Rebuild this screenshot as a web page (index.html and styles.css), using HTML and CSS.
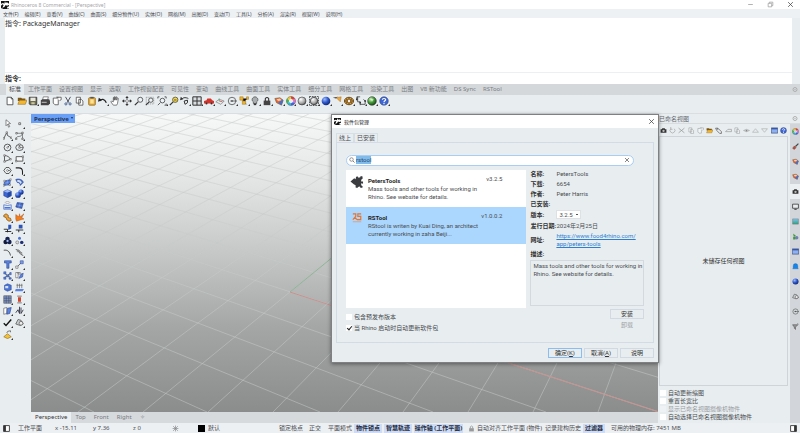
FILE: index.html
```html
<!DOCTYPE html>
<html lang="zh-CN">
<head>
<meta charset="utf-8">
<title>Rhinoceros 8 Commercial</title>
<link rel="stylesheet" href="styles.css">
</head>
<body>
<svg class="sprite" aria-hidden="true">
  <defs>
    <radialGradient id="gBlue" cx=".35" cy=".3" r=".8"><stop offset="0" stop-color="#9dbcff"/><stop offset=".5" stop-color="#2c55c8"/><stop offset="1" stop-color="#0b1f63"/></radialGradient>
    <radialGradient id="gGreen" cx=".35" cy=".3" r=".8"><stop offset="0" stop-color="#c8f0b0"/><stop offset=".5" stop-color="#3f9a35"/><stop offset="1" stop-color="#143a12"/></radialGradient>
    <radialGradient id="gGray" cx=".35" cy=".3" r=".8"><stop offset="0" stop-color="#fff"/><stop offset=".6" stop-color="#a8a8a8"/><stop offset="1" stop-color="#444"/></radialGradient>
    <linearGradient id="gSky" x2="0" y2="1"><stop offset="0" stop-color="#7fc4f5"/><stop offset="1" stop-color="#2fa17c"/></linearGradient>
  </defs>
  <g fill="none" stroke="#333" stroke-width="1">
  <symbol id="rhino" viewBox="0 0 12 12"><path fill="#111" d="M0 0h12v12H0z"/><path fill="#fff" d="M6 0l1 3 2-1 3 2v2L9 7 7 6 5 9l-3 1 2-4-2-1-2 2V4l3-1 2 1z"/><path fill="#fff" d="M9 9l3-1v3l-2 1zM1 10l2 2H0z"/></symbol>
  <symbol id="new" viewBox="0 0 12 12"><path fill="#fff" stroke="#444" d="M2.500 1.500h5l2 2v7h-7zM7.500 1.500v2h2"/></symbol>
  <symbol id="open" viewBox="0 0 12 12"><path fill="#7a5716" d="M1 2h4l1 1h4v3H1z"/><path fill="#f2b632" stroke="#8a6010" stroke-width=".6" d="M1 10l2-5h9l-2 5z"/></symbol>
  <symbol id="save" viewBox="0 0 12 12"><path fill="#6f6d4e" stroke="#333" d="M1.500 1.500h9v9h-8l-1-1z"/><path fill="#e8e8e0" d="M3 2h6v4H3z"/><path fill="#c9c7a0" d="M4 7.500h4V10H4z"/></symbol>
  <symbol id="print" viewBox="0 0 12 12"><path fill="#fff" stroke="#444" stroke-width=".7" d="M4 1h6L9 5H3z"/><path fill="#444" d="M1 5l2-1h8l1 2v3l-2 2H1z"/><path fill="#ddd" d="M2 7h6v1H2z"/></symbol>
  <symbol id="props" viewBox="0 0 12 12"><path fill="#fff" stroke="#444" stroke-width=".9" d="M1.500 2.500h6v8h-4l-2-2z"/><path fill="#fff" stroke="#444" stroke-width=".9" d="M5 1.500h6v3l-2 1M7 1v2"/></symbol>
  <symbol id="cut" viewBox="0 0 12 12"><path stroke="#334" d="M3 1l4 7M9 1L5 8"/><circle cx="3.500" cy="9.500" r="1.300" stroke="#35538c" fill="none"/><circle cx="8.500" cy="9.500" r="1.300" stroke="#35538c" fill="none"/></symbol>
  <symbol id="copy" viewBox="0 0 12 12"><path fill="#fff" stroke="#444" stroke-width=".9" d="M1.500 1.500h5v7h-5zM4.500 4h3l2 2v5h-5z"/></symbol>
  <symbol id="paste" viewBox="0 0 12 12"><rect x="2" y="2" width="8" height="9" rx="1" fill="#e9b03a" stroke="#7c5714" stroke-width=".8"/><path fill="#555" d="M4 1h4v2H4z"/><path fill="#ffe29a" d="M4 4h4v5H4z"/></symbol>
  <symbol id="undo" viewBox="0 0 12 12"><path fill="none" stroke="#222" stroke-width="1.500" d="M2 6c2-3 6-3 8 2"/><path fill="#222" d="M0 7l1-5 4 3z"/></symbol>
  <symbol id="hand" viewBox="0 0 12 12"><path fill="#fff" stroke="#444" stroke-width=".8" d="M4 11L1 7l1-1 2 1V2l1 0v3-4h1v4l1-4 1 0v4l1-3 1 1-1 6-1 2z"/></symbol>
  <symbol id="orbit" viewBox="0 0 12 12"><path stroke="#333" fill="none" d="M6 1v10M1 6h10"/><path fill="#333" d="M6 0l2 2.500H4zM6 12l2-2.500H4zM0 6l2.500-2v4zM12 6L9.500 4v4z"/><circle cx="6" cy="6" r="1.200" fill="#eee"/></symbol>
  <symbol id="mag" viewBox="0 0 12 12"><path stroke="#333" stroke-width="1.500" d="M5 7l-4 4"/><circle cx="7.500" cy="4.500" r="3" fill="#eef3f7" stroke="#444"/></symbol>
  <symbol id="magwin" viewBox="0 0 12 12"><path fill="none" stroke="#777" stroke-width=".7" stroke-dasharray="1.500 1" d="M1.500 1.500h9v8h-9z"/><path stroke="#333" stroke-width="1.300" d="M5 7l-4 4"/><circle cx="7" cy="5" r="2.600" fill="#eef3f7" stroke="#444"/></symbol>
  <symbol id="magext" viewBox="0 0 12 12"><path fill="none" stroke="#333" stroke-width=".9" d="M1 3V1h2M9 1h2v2M11 9v2H9M4 8l-3 3"/><circle cx="6.500" cy="5.500" r="2.800" fill="#eef3f7" stroke="#444"/></symbol>
  <symbol id="magsel" viewBox="0 0 12 12"><path stroke="#333" stroke-width="1.500" d="M5 7l-4 4"/><circle cx="7.500" cy="4.500" r="3.200" fill="#f5d33c" stroke="#554"/><path fill="#776" d="M6 4h3v1.500H6z"/></symbol>
  <symbol id="undoview" viewBox="0 0 12 12"><path fill="none" stroke="#333" stroke-width="1.200" d="M2 4c2-3 6-2 8-1M5 6l4-1v3l-3 2z"/><path fill="#333" d="M0 5l1-4 3 3z"/></symbol>
  <symbol id="four" viewBox="0 0 12 12"><path fill="#d9dde0" stroke="#333" stroke-width="1.200" d="M1 1h10v10H1zM6 1v10M1 6h10"/></symbol>
  <symbol id="car" viewBox="0 0 12 12"><path fill="#d2332b" d="M0 6l3-1 1-2h4l2 2 2 1v3H0z"/><circle cx="3" cy="9" r="1.200" fill="#333"/><circle cx="9" cy="9" r="1.200" fill="#333"/></symbol>
  <symbol id="cplane" viewBox="0 0 12 12"><path fill="#e9eceb" stroke="#777" stroke-width=".8" d="M1 7l4-3 6 2-4 4z"/><path stroke="#c55" d="M5 6l4 1"/><path stroke="#4a7" d="M5 6V3"/></symbol>
  <symbol id="circle" viewBox="0 0 12 12"><circle cx="6" cy="6" r="4.500" fill="none" stroke="#555"/><path stroke="#555" d="M4 6h8"/><path fill="#555" d="M5 5h2v2H5z"/></symbol>
  <symbol id="snap" viewBox="0 0 12 12"><path stroke="#555" d="M3 3l3 4 4-4M6 7l3 3"/><path fill="#f0b429" stroke="#8a6010" stroke-width=".5" d="M1 1h4v4H1zM4 6h4v4H4zM9 1h2.500v3H9z"/></symbol>
  <symbol id="bulb" viewBox="0 0 12 12"><path fill="#a9adb0" stroke="#444" stroke-width=".8" d="M4 7C1 5 3 1 6 1s5 4 2 6v2H4z"/><path fill="#333" d="M4.500 9h3v2h-3z"/></symbol>
  <symbol id="lock" viewBox="0 0 12 12"><path fill="none" stroke="#333" stroke-width="1.300" d="M4 6V3q2-2.500 4 0v3"/><path fill="#444" d="M2 5.500h8V11H2z"/></symbol>
  <symbol id="layer" viewBox="0 0 12 12"><path fill="#e7643c" stroke="#552" stroke-width=".6" d="M1 3l6-1 4 3-2 6-6-3z"/><path fill="#4b6fc0" d="M5 8l5-4 1 2-2 5z"/><path fill="#ffd0a8" d="M3 4l4-1 2 2-4 1z"/></symbol>
  <symbol id="wheel" viewBox="0 0 12 12"><g fill="none" stroke-width="2.800"><path stroke="#e63b2e" d="M6 2a4 4 0 0 1 3.500 2"/><path stroke="#e86ad0" d="M9.500 4a4 4 0 0 1 0 4"/><path stroke="#4560e8" d="M9.500 8A4 4 0 0 1 6 10"/><path stroke="#28b8d8" d="M6 10a4 4 0 0 1-3.500-2"/><path stroke="#3cb948" d="M2.500 8a4 4 0 0 1 0-4"/><path stroke="#edc52c" d="M2.500 4A4 4 0 0 1 6 2"/></g><circle cx="6" cy="6" r="5.500" fill="none" stroke="#444" stroke-width=".5"/></symbol>
  <symbol id="ballgray" viewBox="0 0 12 12"><circle cx="6" cy="6" r="4.800" fill="url(#gGray)" stroke="#333" stroke-width=".7"/></symbol>
  <symbol id="ballsel" viewBox="0 0 12 12"><path fill="none" stroke="#333" stroke-dasharray="2 1" d="M.500.500h11v11H.500z"/><circle cx="6" cy="6" r="4.500" fill="url(#gGray)" stroke="#333" stroke-width=".9"/></symbol>
  <symbol id="ballblue" viewBox="0 0 12 12"><circle cx="6" cy="6" r="5.200" fill="url(#gBlue)"/></symbol>
  <symbol id="spot" viewBox="0 0 12 12"><path fill="#333" d="M1 2l6-1-2 2z"/><path fill="#f0a73a" stroke="#9c6418" stroke-width=".5" d="M5 2l6-1-1 6z"/></symbol>
  <symbol id="gear" viewBox="0 0 12 12"><ellipse cx="6" cy="6" rx="5.500" ry="4.500" fill="#d69a3d" stroke="#5a3c10"/><path stroke="#4a3212" d="M6 2v8M1 6h10M2.500 3.500l7 5M9.500 3.500l-7 5"/><circle cx="6" cy="6" r="1.500" fill="#eee"/></symbol>
  <symbol id="dims" viewBox="0 0 12 12"><path fill="none" stroke="#333" stroke-width=".9" d="M5 1H1v3M2 1v6h3M5 8v3M5 10h6V6M9 4l2 2"/><path fill="#333" d="M0 3h2v2H0zM4 7h2v2H4zM10 5h2v2h-2z"/></symbol>
  <symbol id="ballgreen" viewBox="0 0 12 12"><circle cx="6" cy="6" r="5.200" fill="url(#gGreen)" stroke="#222" stroke-width=".6"/><path fill="#fff" d="M4 3l4 1-2 3z" opacity=".6"/></symbol>
  <symbol id="help" viewBox="0 0 12 12"><circle cx="6" cy="6" r="5.200" fill="#3d65d6" stroke="#234" stroke-width=".5"/><path fill="none" stroke="#fff" stroke-width="1.400" d="M4 4.500c0-2 4-2 4 0C8 6 6 5.500 6 7.500M6 8.500V10"/></symbol>

  <symbol id="arrow" viewBox="0 0 12 12"><path fill="#fff" stroke="#444" stroke-width=".8" d="M4 1v8l2-2 1.500 4 1.500-1-2-3.500 3-.5z"/></symbol>
  <symbol id="point" viewBox="0 0 12 12"><path fill="#fff" stroke="#333" stroke-width=".8" d="M5 5h2.500v2.500H5z"/></symbol>
  <symbol id="poly" viewBox="0 0 12 12"><path fill="none" stroke="#333" d="M1 10l4-8 1 4 5 3"/><path fill="#fff" stroke="#333" stroke-width=".6" d="M0 9h2v2H0zM4 1h2v2H4zM10 8h2v2h-2z"/></symbol>
  <symbol id="curve" viewBox="0 0 12 12"><path fill="none" stroke="#444" stroke-width=".8" d="M1.500 10.500c0-6 8 0 8-8M2 3h8v8"/><path fill="#fff" stroke="#333" stroke-width=".7" d="M.500 9.500h2v2h-2zM1 2h2v2H1zM9 1.500h2v2H9zM9 9.500h2v2H9z"/></symbol>
  <symbol id="circ" viewBox="0 0 12 12"><circle cx="6" cy="6" r="4.500" fill="none" stroke="#333"/><path stroke="#333" d="M6 6l3-3"/><circle cx="6" cy="6" r="1" fill="#fff" stroke="#333" stroke-width=".6"/></symbol>
  <symbol id="ellipse" viewBox="0 0 12 12"><ellipse cx="6" cy="6" rx="5" ry="4" fill="none" stroke="#333"/><path fill="none" stroke="#333" stroke-width=".7" d="M6 2v4h5"/><path fill="#fff" stroke="#333" stroke-width=".6" d="M5 5h2v2H5zM5 1h2v2H5z"/></symbol>
  <symbol id="arc" viewBox="0 0 12 12"><path fill="none" stroke="#333" d="M2 10V2c3 0 7 2 8 5z"/><path fill="#fff" stroke="#333" stroke-width=".6" d="M1 1h2v2H1zM1 9h2v2H1zM9 6h2v2H9z"/></symbol>
  <symbol id="rect" viewBox="0 0 12 12"><path fill="#f8f9fa" stroke="#333" d="M1.500 3.500h9v6h-9z"/><path fill="#fff" stroke="#333" stroke-width=".6" d="M.500 8.500h2v2h-2zM9.500 2.500h2v2h-2z"/></symbol>
  <symbol id="polygon" viewBox="0 0 12 12"><path fill="none" stroke="#333" d="M4 2h4l3 4-3 4H4L1 6z"/><path stroke="#333" d="M6 6h3"/><circle cx="6" cy="6" r="1.200" fill="#fff" stroke="#333" stroke-width=".6"/></symbol>
  <symbol id="fillet" viewBox="0 0 12 12"><path fill="none" stroke="#222" stroke-width="1.400" d="M1 2.500h4c3 0 5 2 5 5v4"/></symbol>
  <symbol id="surf" viewBox="0 0 12 12"><path fill="#4a74d4" stroke="#203a80" stroke-width=".7" d="M2 4l8-2-1 7-8 1z"/><path fill="#fff" stroke="#333" stroke-width=".5" d="M1 3h2v2H1zM9 1h2v2H9zM0 9h2v2H0zM8 8h2v2H8z"/><path stroke="#a9c1f5" stroke-width=".6" d="M6 3l-1 7M2 7l7-2"/></symbol>
  <symbol id="sweep" viewBox="0 0 12 12"><path fill="#4a74d4" stroke="#203a80" stroke-width=".7" d="M1 2c5-2 10 1 10 4L7 10c0-3-2-4-4-4z"/><path fill="#d5e0fb" d="M3 3c3-1 5 1 6 3L7 8C7 6 5 5 3 5z"/></symbol>
  <symbol id="box" viewBox="0 0 12 12"><path fill="#3d66cf" stroke="#16307c" stroke-width=".6" d="M1 3l5-2 5 2v6l-5 2.500L1 9z"/><path fill="#9db8f5" d="M1 3l5-2 5 2-5 2z"/><path fill="#244aa8" d="M6 5l5-2v6l-5 2.500z"/></symbol>
  <symbol id="union" viewBox="0 0 12 12"><circle cx="8" cy="4" r="3.500" fill="url(#gBlue)"/><circle cx="4" cy="8" r="3.800" fill="url(#gBlue)"/></symbol>
  <symbol id="drum" viewBox="0 0 12 12"><ellipse cx="6" cy="2" rx="3" ry="1.300" fill="#f5f5f5" stroke="#777" stroke-width=".6"/><path fill="#dfe8fb" stroke="#2e55b5" stroke-width=".8" d="M1 5q5 2 10 0v6H1z"/><path fill="#4a74d4" d="M2 8h8v2H2z"/></symbol>
  <symbol id="mesh" viewBox="0 0 12 12"><path fill="#4068c4" stroke="#203a80" stroke-width=".7" d="M3 2l8 1-2 7-8-2z"/><path stroke="#a9c1f5" stroke-width=".6" d="M7 2L5 9M2 5l8 2"/></symbol>
  <symbol id="explode" viewBox="0 0 12 12"><path fill="#f2a33a" stroke="#5c3a0a" stroke-width=".8" d="M1 3l3-2 3 2v3l3 1 1 3-3 1-3-2-1-3-3-1z"/></symbol>
  <symbol id="burst" viewBox="0 0 12 12"><path fill="#ef7d22" stroke="#a44808" stroke-width=".5" d="M1 2l4 3 1-4 1 4 5-4-3 5 3 2-4 1-6 2-1-3z"/></symbol>
  <symbol id="trim" viewBox="0 0 12 12"><path fill="#2e55b5" d="M7 1h4v5L7 8z"/><path fill="none" stroke="#222" stroke-width="1.200" d="M1 7h5v4M3 10h8"/></symbol>
  <symbol id="split" viewBox="0 0 12 12"><path fill="#2e55b5" d="M5 1h5v5H5z"/><path fill="none" stroke="#222" stroke-width="1.200" d="M1 8h10M5 8v3"/></symbol>
  <symbol id="group" viewBox="0 0 12 12"><circle cx="6" cy="4" r="3" fill="#16224e"/><circle cx="3.500" cy="8" r="3" fill="#111a3a"/><circle cx="8.500" cy="8" r="3" fill="#16224e"/><circle cx="6" cy="6.500" r="1.500" fill="#a9c1f5"/></symbol>
  <symbol id="ungroup" viewBox="0 0 12 12"><circle cx="6" cy="3" r="2" fill="#4a74d4"/><circle cx="3" cy="8.500" r="2" fill="#ddd" stroke="#444" stroke-width=".6"/><circle cx="9" cy="8.500" r="2.300" fill="#1c2f77"/></symbol>
  <symbol id="arc2" viewBox="0 0 12 12"><path fill="none" stroke="#333" stroke-width="1.100" d="M1 3c5-1 8 2 9 7"/></symbol>
  <symbol id="edit" viewBox="0 0 12 12"><path fill="none" stroke="#333" d="M1 2c4 0 4 6 10 8M4 2l4 4"/><path fill="#fff" stroke="#333" stroke-width=".6" d="M3 3h2v2H3zM7 6h2v2H7z"/></symbol>
  <symbol id="text" viewBox="0 0 12 12"><path fill="#5b83e2" stroke="#1c3680" stroke-width=".7" d="M2 1h9v3H8v7H5V4H2z"/></symbol>
  <symbol id="move" viewBox="0 0 12 12"><path stroke="#444" d="M3 9l6-6"/><path fill="#fff" stroke="#444" stroke-width=".7" d="M1 8h3v3H1z"/><path fill="#7b9bea" stroke="#2e4a90" stroke-width=".7" d="M7 1h4v4H7z"/></symbol>
  <symbol id="array" viewBox="0 0 12 12"><path stroke="#333" d="M2 3l8 6M2 9l8-6"/><path fill="#5b83e2" stroke="#1c3680" stroke-width=".5" d="M1 1h3v3H1zM5 5h3v3H5zM9 2h2v3H9zM1 8h3v3H1zM8 9h3v2H8z"/></symbol>
  <symbol id="orient" viewBox="0 0 12 12"><path fill="#fff" stroke="#444" stroke-width=".7" d="M1 2h3v7H1zM4 2h3v2H4z"/><path fill="#5b83e2" stroke="#1c3680" stroke-width=".6" d="M5 10l3-6 3-1-1 5z"/></symbol>
  <symbol id="cyl" viewBox="0 0 12 12"><path fill="#4a74d4" stroke="#203a80" stroke-width=".6" d="M2 3l4-2 5 2v6l-5 2-4-2z"/><path fill="#d5e0fb" d="M3 4h4v3H3z"/></symbol>
  <symbol id="extrude" viewBox="0 0 12 12"><path stroke="#555" stroke-width=".8" d="M3 7V1M6 7V1M9 7V1M2 3h8"/><path fill="#5b83e2" d="M1 8h11l-2 3H0z"/></symbol>
  <symbol id="grid" viewBox="0 0 12 12"><path fill="#7c97cf" stroke="#444" stroke-width=".7" d="M1 1h10v10H1zM4.300 1v10M7.700 1v10M1 4.300h10M1 7.700h10"/></symbol>
  <symbol id="align" viewBox="0 0 12 12"><path fill="#d0432c" d="M4 3h4v6H4z"/><path stroke="#555" d="M3 1.500h6M3 10.500h6"/></symbol>
  <symbol id="flip" viewBox="0 0 12 12"><path fill="#fff" stroke="#333" stroke-width=".7" d="M1 3l4-1v8l-4 1z"/><path fill="#5b83e2" stroke="#1c3680" stroke-width=".7" d="M6 3l5-1-2 8-4 1z"/></symbol>
  <symbol id="split2" viewBox="0 0 12 12"><path fill="none" stroke="#334" stroke-width="1.200" d="M1 9l3-4 2 5V1M8 2v8l3-5"/></symbol>
  <symbol id="check" viewBox="0 0 12 12"><path fill="none" stroke="#111" stroke-width="1.800" d="M1 7l3 3 7-8"/></symbol>
  <symbol id="shape" viewBox="0 0 12 12"><path fill="#c8cccf" stroke="#333" stroke-width=".8" d="M1 8l3-6 4 1 3 5-4 2z"/><circle cx="8" cy="7" r="2.500" fill="#eee" stroke="#333" stroke-width=".7"/></symbol>
  <symbol id="bell2" viewBox="0 0 12 12"><path fill="#f3c138" stroke="#7b5a10" stroke-width=".7" d="M1 9l5-4 5 4-5 2.500z"/><path fill="none" stroke="#555" d="M5 4q0-3 5-3v2"/></symbol>

  <symbol id="camera" viewBox="0 0 12 12"><path fill="#333" d="M1 4h2l1-2h4l1 2h2v6H1z"/><circle cx="6" cy="6.500" r="2" fill="#bbb"/></symbol>
  <symbol id="reset" viewBox="0 0 12 12"><path fill="none" stroke="#aaa" stroke-width="1.300" d="M3 3a4.200 4.200 0 1 0 6 0M3 0v4h3"/></symbol>
  <symbol id="xmark" viewBox="0 0 12 12"><path stroke="#999" stroke-width="1.300" d="M1 2l10 8M11 2L1 10"/></symbol>
  <symbol id="link" viewBox="0 0 12 12"><path fill="none" stroke="#555" stroke-width="1.200" d="M1 2h4l6 6v3H8L3 6zM4 2l1 3"/></symbol>
  <symbol id="tag" viewBox="0 0 12 12"><path fill="none" stroke="#999" stroke-width="1.200" d="M1 8l4-4h6v4z"/></symbol>
  <symbol id="eye" viewBox="0 0 12 12"><path fill="none" stroke="#999" d="M1 6q5-4 10 0q-5 4-10 0"/><circle cx="6" cy="6" r="1.500" fill="#888"/></symbol>
  <symbol id="up" viewBox="0 0 12 12"><path fill="none" stroke="#aaa" stroke-width="1.100" d="M1 9l5-6 5 6z"/></symbol>
  <symbol id="down" viewBox="0 0 12 12"><path fill="none" stroke="#aaa" stroke-width="1.100" d="M1 3l5 6 5-6z"/></symbol>
  <symbol id="window" viewBox="0 0 12 12"><path fill="#8eb0f0" stroke="#2b3c70" d="M.500 1.500h11v9H.500z"/><path fill="#2b4a9c" d="M1 2h10v2H1z"/></symbol>
  <symbol id="brush" viewBox="0 0 12 12"><path stroke="#444" stroke-width="2" d="M11 1L6 6"/><path fill="#d0432c" stroke="#333" stroke-width=".6" d="M1 9l3-4 3 3-3 3z"/></symbol>
  <symbol id="screen" viewBox="0 0 12 12"><path fill="#e8ebee" stroke="#222" stroke-width="1.200" d="M1 2h10v7H1z"/><path fill="#222" d="M4 10h4v1.500H4z"/></symbol>
  <symbol id="image" viewBox="0 0 12 12"><path fill="url(#gSky)" stroke="#777" stroke-width=".8" d="M1 1.500h10v9H1z"/></symbol>
  <symbol id="plant" viewBox="0 0 12 12"><path fill="#3f9a35" d="M2 1l5 4-4 2zM2 7h4v4H2z"/><circle cx="8" cy="8" r="3" fill="#6f7fb0"/></symbol>
  <symbol id="bell" viewBox="0 0 12 12"><path fill="#1684e8" stroke="#0b5cad" stroke-width=".5" d="M2 9V5q0-4 4-4t4 4v4l1 1H1z"/></symbol>
  <symbol id="funnel" viewBox="0 0 12 12"><path fill="#999" stroke="#444" stroke-width=".9" d="M1 3h9L6 7v4L4 9V7zM9 1l2 1"/></symbol>
  <symbol id="cog" viewBox="0 0 12 12"><circle cx="6" cy="6" r="4" fill="none" stroke="#aaa" stroke-width="1.800"/><circle cx="6" cy="6" r="1.200" fill="#aaa"/></symbol>
  <symbol id="sun" viewBox="0 0 12 12"><path stroke="#888" stroke-width="1.200" d="M6 1v10M1 6h10M2 2l8 8M10 2l-8 8"/></symbol>
  <symbol id="dock" viewBox="0 0 12 12"><path fill="#fff" stroke="#333" stroke-width="1.500" d="M1 1h10v10H1z"/><path fill="#333" d="M1 1h4v10H1z"/></symbol>
  <symbol id="dockright" viewBox="0 0 12 12"><path fill="#fff" stroke="#333" stroke-width="1.500" d="M1 1h10v10H1z"/><path fill="#333" d="M7 1h4v10H7z"/></symbol>
  <symbol id="search" viewBox="0 0 12 12"><circle cx="5" cy="5" r="3.500" fill="none" stroke="#555" stroke-width="1.200"/><path stroke="#555" stroke-width="1.500" d="M8 8l3 3"/></symbol>
  <symbol id="close" viewBox="0 0 12 12"><path stroke="#444" stroke-width="1.300" d="M2 2l8 8M10 2l-8 8"/></symbol>
  <symbol id="min" viewBox="0 0 12 12"><path stroke="#999" stroke-width="1.300" d="M2 6h8"/></symbol>
  <symbol id="max" viewBox="0 0 12 12"><path fill="none" stroke="#999" stroke-width="1.200" d="M2 4h6v6H2zM4 4V2h6v6H8"/></symbol>
  <symbol id="plugin" viewBox="0 0 14 14"><path fill="#3b3c40" d="M0 7l4-3.500 1.500 1L6 2l2-.5.500 1.500 2-.5L11 1l2 .5V4l-1.500 1 0 2 2 0v2.500l-2-.5v2l1.500 1v1.500l-2 .5-1-1.500-2 .5-.500 1-2-.5V11l-2-1z"/></symbol>
  <symbol id="rs" viewBox="0 0 12 12"><path fill="none" stroke="#e8732c" stroke-width="1.400" d="M1 1h3.500v3L1 8M3 5l3 3"/><path fill="none" stroke="#e8732c" stroke-width="1.400" d="M11 1H7v3h3.500v4H6"/><path stroke="#e59a6c" stroke-width="1" d="M1 10.500h10"/></symbol>
  </g>
</svg>

<div class="app">
  <header class="titlebar">
    <svg class="i"><use href="#rhino"/></svg><span class="grow">Rhinoceros 8 Commercial - [Perspective]</span>
    <button class="win" aria-label="最小化"><svg class="i"><use href="#min"/></svg></button>
    <button class="win" aria-label="还原"><svg class="i"><use href="#max"/></svg></button>
    <button class="win" aria-label="关闭"><svg class="i"><use href="#close"/></svg></button>
  </header>
  <nav class="menubar">
    <a href="#">文件(F)</a><a href="#">编辑(E)</a><a href="#">查看(V)</a><a href="#">曲线(C)</a><a href="#">曲面(S)</a><a href="#">细分物件(U)</a><a href="#">实体(O)</a><a href="#">网格(M)</a><a href="#">出图(D)</a><a href="#">变动(T)</a><a href="#">工具(L)</a><a href="#">分析(A)</a><a href="#">渲染(R)</a><a href="#">视窗(W)</a><a href="#">说明(H)</a>
  </nav>
  <section class="command">
    <div class="history">指令: PackageManager</div>
    <div class="prompt"><label for="cmd">指令:</label><input id="cmd" type="text"></div>
  </section>
  <nav class="tabs">
    <a class="on" href="#">标准</a><a href="#">工作平面</a><a href="#">设置视图</a><a href="#">显示</a><a href="#">选取</a><a href="#">工作视窗配置</a><a href="#">可见性</a><a href="#">变动</a><a href="#">曲线工具</a><a href="#">曲面工具</a><a href="#">实体工具</a><a href="#">细分工具</a><a href="#">网格工具</a><a href="#">渲染工具</a><a href="#">出图</a><a href="#">V8 新功能</a><a href="#">DS Sync</a><a href="#">RSTool</a>
    <svg class="i cog"><use href="#cog"/></svg>
  </nav>
  <div class="toolbar">
    <button aria-label="新建"><svg><use href="#new"/></svg></button>
    <button aria-label="打开"><svg><use href="#open"/></svg></button>
    <button class="more" aria-label="保存"><svg><use href="#save"/></svg></button>
    <button aria-label="打印"><svg><use href="#print"/></svg></button>
    <button aria-label="属性"><svg><use href="#props"/></svg></button>
    <button aria-label="剪切"><svg><use href="#cut"/></svg></button>
    <button aria-label="复制"><svg><use href="#copy"/></svg></button>
    <button aria-label="粘贴"><svg><use href="#paste"/></svg></button>
    <button class="more" aria-label="复原"><svg><use href="#undo"/></svg></button>
    <button aria-label="平移"><svg><use href="#hand"/></svg></button>
    <button aria-label="旋转"><svg><use href="#orbit"/></svg></button>
    <button aria-label="缩放"><svg><use href="#mag"/></svg></button>
    <button aria-label="框选缩放"><svg><use href="#magwin"/></svg></button>
    <button class="more" aria-label="最大范围"><svg><use href="#magext"/></svg></button>
    <button aria-label="缩放选取"><svg><use href="#magsel"/></svg></button>
    <button class="more" aria-label="复原视图"><svg><use href="#undoview"/></svg></button>
    <button class="more" aria-label="四视图"><svg><use href="#four"/></svg></button>
    <button class="more" aria-label="车"><svg><use href="#car"/></svg></button>
    <button class="more" aria-label="平面"><svg><use href="#cplane"/></svg></button>
    <button class="more" aria-label="圆"><svg><use href="#circle"/></svg></button>
    <button class="more" aria-label="锁点"><svg><use href="#snap"/></svg></button>
    <button class="more" aria-label="灯泡"><svg><use href="#bulb"/></svg></button>
    <button class="more" aria-label="锁定"><svg><use href="#lock"/></svg></button>
    <button class="more" aria-label="图层"><svg><use href="#layer"/></svg></button>
    <button class="more" aria-label="颜色"><svg><use href="#wheel"/></svg></button>
    <button class="more" aria-label="着色"><svg><use href="#ballgray"/></svg></button>
    <button class="more" aria-label="着色选取"><svg><use href="#ballsel"/></svg></button>
    <button class="more" aria-label="渲染"><svg><use href="#ballblue"/></svg></button>
    <button class="more" aria-label="聚光灯"><svg><use href="#spot"/></svg></button>
    <button class="more" aria-label="选项"><svg><use href="#gear"/></svg></button>
    <button class="more" aria-label="标注"><svg><use href="#dims"/></svg></button>
    <button class="more" aria-label="材质"><svg><use href="#ballgreen"/></svg></button>
    <button class="more" aria-label="帮助"><svg><use href="#help"/></svg></button>
  </div>

  <main class="work">
    <aside class="tools">
      <button aria-label="选取"><svg><use href="#arrow"/></svg></button><button class="more" aria-label="点"><svg><use href="#point"/></svg></button>
      <button class="more" aria-label="多重直线"><svg><use href="#poly"/></svg></button><button class="more" aria-label="曲线"><svg><use href="#curve"/></svg></button>
      <button class="more" aria-label="圆"><svg><use href="#circ"/></svg></button><button class="more" aria-label="椭圆"><svg><use href="#ellipse"/></svg></button>
      <button class="more" aria-label="圆弧"><svg><use href="#arc"/></svg></button><button class="more" aria-label="矩形"><svg><use href="#rect"/></svg></button>
      <button class="more" aria-label="多边形"><svg><use href="#polygon"/></svg></button><button class="more" aria-label="圆角"><svg><use href="#fillet"/></svg></button>
      <button class="more" aria-label="曲面"><svg><use href="#surf"/></svg></button><button class="more" aria-label="扫掠"><svg><use href="#sweep"/></svg></button>
      <button class="more" aria-label="立方体"><svg><use href="#box"/></svg></button><button class="more" aria-label="布尔"><svg><use href="#union"/></svg></button>
      <button class="more" aria-label="投影"><svg><use href="#drum"/></svg></button><button class="more" aria-label="网格"><svg><use href="#mesh"/></svg></button>
      <button class="more" aria-label="组合"><svg><use href="#explode"/></svg></button><button class="more" aria-label="炸开"><svg><use href="#burst"/></svg></button>
      <button class="more" aria-label="修剪"><svg><use href="#trim"/></svg></button><button class="more" aria-label="分割"><svg><use href="#split"/></svg></button>
      <button class="more" aria-label="群组"><svg><use href="#group"/></svg></button><button class="more" aria-label="解散"><svg><use href="#ungroup"/></svg></button>
      <button class="more" aria-label="编辑点"><svg><use href="#arc2"/></svg></button><button class="more" aria-label="控制点"><svg><use href="#edit"/></svg></button>
      <button class="more" aria-label="文字"><svg><use href="#text"/></svg></button><button class="more" aria-label="移动"><svg><use href="#move"/></svg></button>
      <button class="more" aria-label="阵列"><svg><use href="#array"/></svg></button><button class="more" aria-label="定位"><svg><use href="#orient"/></svg></button>
      <button class="more" aria-label="实体"><svg><use href="#cyl"/></svg></button><button class="more" aria-label="挤出"><svg><use href="#extrude"/></svg></button>
      <button class="more" aria-label="格点"><svg><use href="#grid"/></svg></button><button class="more" aria-label="对齐"><svg><use href="#align"/></svg></button>
      <button class="more" aria-label="镜像"><svg><use href="#flip"/></svg></button><button class="more" aria-label="截断"><svg><use href="#split2"/></svg></button>
      <button class="more" aria-label="检查"><svg><use href="#check"/></svg></button><button class="more" aria-label="形状"><svg><use href="#shape"/></svg></button>
      <button class="more" aria-label="历史"><svg><use href="#bell2"/></svg></button>
    </aside>
    <section class="center">
      <div class="viewport">
        <svg class="scene" viewBox="31 113 627 298" preserveAspectRatio="xMinYMin slice">
          <path class="gridline" d="M792-119L-962 411M792-119L-897 411M792-119L-832 411M792-119L-767 411M792-119L-702 411M792-119L-637 411M792-119L-572 411M792-119L-507 411M792-119L-442 411M792-119L-377 411M792-119L-312 411M792-119L-247 411M792-119L-182 411M792-119L-117 411M792-119L-52 411M792-119L13 411M792-119L78 411M792-119L143 411M792-119L208 411M792-119L273 411M792-119L338 411M792-119L403 411M792-119L468 411M792-119L533 411M792-119L598 411M792-119L663 411"/>
          <path class="gridline" d="M-968-119L94 411M-968-119L207 411M-968-119L320 411M-968-119L433 411M-968-119L546 411M-968-119L659 411M-968-119L772 411M-968-119L885 411M-968-119L998 411M-968-119L1111 411M-968-119L1224 411M-968-119L1337 411M-968-119L1450 411M-968-119L1563 411M-968-119L1676 411M-968-119L1789 411M-968-119L1902 411M-968-119L2015 411M-968-119L2128 411M-968-119L2241 411M-968-119L2354 411M-968-119L2467 411M-968-119L2580 411M-968-119L2693 411"/>
          <path class="axis-y" d="M290 291L792-119"/>
          <path class="axis-x" d="M290 291L659 411"/>
        </svg>
        <button class="viewname">Perspective<i></i></button>
      </div>
      <nav class="viewtabs"><a class="on" href="#">Perspective</a><a href="#">Top</a><a href="#">Front</a><a href="#">Right</a><span>✧</span></nav>
    </section>
    <aside class="panel">
      <h2>已命名视图<svg class="i cog"><use href="#cog"/></svg></h2>
      <div class="views">
        <div class="viewtools">
          <svg class="i"><use href="#camera"/></svg><svg class="i"><use href="#reset"/></svg><svg class="i"><use href="#xmark"/></svg><svg class="i dim"><use href="#copy"/></svg><svg class="i dim"><use href="#props"/></svg><svg class="i"><use href="#open"/></svg><svg class="i"><use href="#link"/></svg><svg class="i"><use href="#tag"/></svg><svg class="i dim"><use href="#copy"/></svg><svg class="i"><use href="#eye"/></svg><svg class="i"><use href="#up"/></svg><svg class="i"><use href="#down"/></svg><svg class="i"><use href="#window"/></svg><svg class="i"><use href="#help"/></svg>
        </div>
        <div class="empty">未储存任何视图</div>
        <div class="options">
          <label><input type="checkbox">自动更新缩图</label>
          <label><input type="checkbox">重置长宽比</label>
          <label class="off"><input type="checkbox" disabled>显示已命名视图摄像机物件</label>
          <label><input type="checkbox">自动选择已命名视图摄像机物件</label>
        </div>
      </div>
      <nav class="strip">
        <a href="#"><svg class="i"><use href="#wheel"/></svg></a><a href="#"><svg class="i"><use href="#brush"/></svg></a><a href="#"><svg class="i"><use href="#layer"/></svg></a><a href="#"><svg class="i"><use href="#layer"/></svg></a><a class="on" href="#"><svg class="i"><use href="#camera"/></svg></a><a href="#"><svg class="i"><use href="#screen"/></svg></a><a href="#"><svg class="i"><use href="#image"/></svg></a><a href="#"><svg class="i"><use href="#plant"/></svg></a><a href="#"><svg class="i"><use href="#window"/></svg></a><a href="#"><svg class="i"><use href="#bell"/></svg></a><a href="#"><svg class="i"><use href="#ballblue"/></svg></a><a href="#"><svg class="i"><use href="#shape"/></svg></a><a href="#"><svg class="i"><use href="#circle"/></svg></a><a href="#"><svg class="i"><use href="#funnel"/></svg></a>
      </nav>
    </aside>
  </main>

  <footer class="status">
    <svg class="i"><use href="#dock"/></svg><span>工作平面</span><span>x -15.11</span><span>y 7.36</span><span>z 0</span><svg class="i"><use href="#sun"/></svg>
    <span class="layer"><i></i>默认</span>
    <span>锁定格点</span><span>正交</span><span>平面模式</span>
    <button class="on">物件锁点</button><button class="on">智慧轨迹</button><button class="on">操作轴 (工作平面)</button>
    <svg class="i dim mid"><use href="#lock"/></svg><span>自动对齐工作平面 (物件)</span><span>记录建构历史</span><button class="on">过滤器</button><span class="memory">可用的物理内存: 7451 MB</span><svg class="i"><use href="#dockright"/></svg>
  </footer>

  <div class="dialog" role="dialog" aria-label="软件包管理">
    <div class="dlg-title"><svg class="i"><use href="#rhino"/></svg><span class="grow">软件包管理</span><button class="win" aria-label="关闭"><svg class="i"><use href="#close"/></svg></button></div>
    <div class="dlg-tabs"><a class="on" href="#">线上</a><a href="#">已安装</a></div>
    <div class="dlg-body">
      <div class="search"><svg class="i"><use href="#search"/></svg><label class="field"><span class="picked">rstool</span><input type="text" aria-label="搜索"></label><button class="win" aria-label="清除"><svg class="i"><use href="#close"/></svg></button></div>
      <div class="cols">
        <ul class="packages">
          <li><svg class="logo"><use href="#plugin"/></svg><div><h3>PetersTools</h3><p>Mass tools and other tools for working in Rhino. See website for details.</p></div><span class="ver">v3.2.5</span></li>
          <li class="on"><svg class="logo rs"><use href="#rs"/></svg><div><h3>RSTool</h3><p>RStool is writen by Kuai Ding, an architect currently working in zaha Beiji...</p></div><span class="ver">v1.0.0.2</span></li>
        </ul>
        <div class="details">
          <dl>
            <dt>名称:</dt><dd>PetersTools</dd>
            <dt>下载:</dt><dd>6654</dd>
            <dt>作者:</dt><dd>Peter Harris</dd>
            <dt>已安装:</dt><dd></dd>
            <dt><label for="ver">版本:</label></dt><dd><select id="ver"><option>3.2.5</option></select></dd>
            <dt>发行日期:</dt><dd>2024年2月25日</dd>
            <dt>网址:</dt><dd class="url"><a href="#">https://www.food4rhino.com/<wbr>app/peters-tools</a></dd>
            <dt>描述:</dt><dd></dd>
          </dl>
          <div class="desc">Mass tools and other tools for working in Rhino. See website for details.</div>
        </div>
      </div>
      <div class="under">
        <div class="checks">
          <label><input type="checkbox">包含预发布版本</label>
          <label><input type="checkbox" checked>当 Rhino 启动时自动更新软件包</label>
        </div>
        <div class="acts"><button class="btn">安装</button><button class="btn off" disabled>卸载</button></div>
      </div>
    </div>
    <div class="dlg-foot"><button class="btn main">确定(<u>K</u>)</button><button class="btn">取消(<u>A</u>)</button><button class="btn">说明</button></div>
  </div>
</div>
</body>
</html>
```
FILE: styles.css
```css
* { box-sizing: border-box; }
body {
  margin: 0;
  font: 6px/8px "Noto Sans", "Noto Sans CJK SC", sans-serif;
  color: #4a4d52;
  background: #e8edf0;
}
button, input, select { font: inherit; color: inherit; margin: 0; padding: 0; border: 0; background: none; }
a { color: inherit; text-decoration: none; }
h2, h3, p, ul, dl, dd { margin: 0; padding: 0; font: inherit; }
.sprite { position: absolute; width: 0; height: 0; }
.i { width: 7px; height: 7px; flex: none; display: block; }
.grow { flex: 1; }
.dim { opacity: .5; }
.mid { justify-self: center; }
.win { display: block; }

.app { position: relative; min-height: 100vh; display: flex; flex-direction: column; }

.titlebar { display: flex; align-items: center; gap: 2px; height: 9px; padding: 0 6px 0 1px; background: #fff; color: #a5a5a8; font-size: 5px; }
.titlebar .win { margin-left: 11px; }
.titlebar > .i { width: 8px; height: 8px; }
.menubar { display: flex; gap: 6px; height: 9px; align-items: center; padding-left: 3px; font-size: 5px; background: #eef1f4; white-space: nowrap; }

.command { height: 66px; display: flex; flex-direction: column; margin: 0 8px 0 5px; background: #fff; color: #333; font-size: 7px; }
.history { flex: 1; padding-top: 2px; border-bottom: 1px solid #edf0f2; }
.prompt { display: flex; height: 11px; align-items: center; font-weight: bold; }
.prompt input { flex: 1; }

.tabs { display: flex; gap: 1px; height: 11px; align-items: center; padding-left: 6px; background: #d4d8db; color: #7b7e82; white-space: nowrap; }
.tabs a { padding: 1px 3px 2px; }
.tabs .on { background: #e8edf0; color: #444; }
.tabs .cog { margin-left: auto; margin-right: 2px; width: 6px; }

.toolbar { display: grid; grid-template-columns: repeat(33, 1fr); width: 386px; height: 18px; margin-left: 4px; }
.toolbar button, .tools button { position: relative; display: grid; place-items: center; height: 11px; }
.toolbar svg { width: 10px; height: 10px; display: block; }
.tools svg { width: 9px; height: 9px; display: block; }
.more::after { content: ""; position: absolute; right: 0; bottom: 0; border: 1px solid #333; border-top-color: transparent; border-left-color: transparent; }

.work { flex: 1; display: flex; border-top: 1px solid #dadee1; }
.tools { width: 31px; padding: 4px 6px 0 1px; display: grid; grid-template-columns: 1fr 1fr; grid-template-rows: repeat(19, 1fr); height: 226px; }
.tools button { place-self: center; width: 11px; }
.center { flex: 1; display: flex; flex-direction: column; background: #d6dadd; }
.viewport { position: relative; flex: 1; overflow: hidden; background: linear-gradient(#f7f8f8, #e4e5e5 22%, #c8cac9 45%, #a4a6a5 72%, #8b8d8c); }
.scene { position: absolute; inset: 0; width: 100%; height: 100%; }
.gridline { stroke: #c6cbca; stroke-width: 1; opacity: .5; fill: none; }
.axis-x { stroke: #c9918d; stroke-width: 1; }
.axis-y { stroke: #8fb597; stroke-width: 1; }
.viewname { position: absolute; left: 0; top: 0; display: flex; align-items: center; gap: 2px; height: 9px; padding: 0 2px 0 3px; background: #6a9ff6; color: #1c3156; font-weight: bold; }
.viewname i { border: 1px solid transparent; border-top: 2px solid #1c3156; }
.viewtabs { display: flex; align-items: center; height: 11px; color: #777b80; }
.viewtabs a, .viewtabs span { padding: 1px 4px 2px; }
.viewtabs .on { background: #eceff2; color: #333; }

.panel { width: 142px; display: grid; grid-template: 10px 1fr / 1fr 10px; }
.panel h2 { grid-column: 1 / 3; display: flex; align-items: center; justify-content: space-between; padding: 0 2px 0 1px; color: #666a70; border-bottom: 1px solid #d8dcdf; }
.panel h2 .i { width: 6px; }
.views { display: flex; flex-direction: column; padding: 0 2px 0 1px; }
.viewtools { display: flex; justify-content: space-between; align-items: center; height: 12px; padding: 0 1px; }
.empty { flex: 1; display: grid; place-items: center; border: 1px solid #cfd4d8; color: #333; }
.options { display: grid; gap: 0; padding: 3px 0 2px 1px; }
.options label, .checks label { display: flex; align-items: center; gap: 2px; }
.options .off { color: #9a9ea3; }
input[type="checkbox"] { appearance: none; width: 6px; height: 6px; background: #fff; }
input[type="checkbox"]:disabled { background: #eff2f4; }
input[type="checkbox"]:checked { position: relative; }
input[type="checkbox"]:checked::after { content: ""; position: absolute; left: 2px; top: 0; width: 2px; height: 4px; border: solid #222; border-width: 0 1px 1px 0; transform: rotate(40deg); }
.strip { background: #d2d6da; }
.strip a { display: grid; place-items: center; height: 15px; }
.strip .on { background: #eceff2; }

.status { display: grid; grid-template-columns: 15px 37px 38px 40px 39px 26px 81px 30px 19px 26px 30px 30px 51px 12px 68px 38px 24px 1fr 10px; align-items: center; height: 10px; padding-left: 3px; white-space: nowrap; background: #edf0f3; }
.status .on { height: 9px; margin-right: 2px; background: #cfdcf3; color: #1f2c44; font-weight: bold; text-align: center; }
.memory { padding-left: 4px; }
.layer { display: flex; align-items: center; gap: 3px; }
.layer i { width: 7px; height: 7px; background: #000; }

.dialog { position: absolute; left: 331px; top: 114px; width: 328px; border: 1px solid #7d8184; background: #e8edf0; box-shadow: 0 1px 4px rgba(0, 0, 0, .45); color: #4a4d52; font-family: Roboto, "Noto Sans CJK SC", sans-serif; }
.dlg-title { display: flex; align-items: center; gap: 3px; height: 13px; padding: 0 3px 0 2px; background: #fff; color: #222; }
.dlg-title .grow { font-size: 5px; }
.dlg-tabs { display: flex; padding: 5px 0 0 4px; }
.dlg-tabs a { padding: 0 2px; height: 9px; border: 1px solid #d8dee6; border-bottom: 0; }
.dlg-body { margin: 0 4px; padding: 12px 9px 10px; height: 201px; border: 1px solid #d5dbe6; display: flex; flex-direction: column; }
.search { display: flex; align-items: center; gap: 1px; height: 11px; margin-right: 10px; padding: 0 3px 0 2px; border: 1px solid #a9cdf3; border-radius: 6px; background: #fff; }
.search .i { width: 6px; height: 6px; }
.field { flex: 1; display: flex; }
.field input { flex: 1; outline: 0; }
.picked { background: #80bbea; color: #2b4a70; }
.cols { display: flex; gap: 4px; margin-top: 4px; height: 140px; }
.packages { width: 181px; background: #fff; list-style: none; }
.packages li { display: flex; gap: 4px; height: 37px; padding: 5px 24px 0 4px; }
.packages .on { background: #abd6fd; }
.packages div { flex: 1; margin-right: -6px; padding-top: 2px; }
.packages h3 { font-weight: bold; color: #222; }
.logo { width: 14px; height: 13px; flex: none; }
.logo.rs { height: 10px; margin-top: 1px; }
.details { width: 114px; }
.details dl { display: grid; grid-template-columns: 26px 1fr; grid-template-rows: 9px 10px 10px 10px 12px 11px 17px 10px; align-items: center; }
.details dt { font-weight: bold; color: #333; white-space: nowrap; }
.details a { color: #2c7fd0; text-decoration: underline; }
.details select { appearance: none; display: block; width: 25px; height: 9px; padding: 0 2px; border: 1px solid #dde1e6; background: #fff linear-gradient(#555, #555) no-repeat 19px 3px / 2px 1px; }
.desc { height: 46px; margin-top: 1px; padding: 1px 0 1px 2px; border: 1px solid #d3d9de; }
.under { display: flex; justify-content: space-between; }
.checks { display: grid; gap: 3px; padding-top: 5px; align-content: start; }
.acts { display: grid; gap: 1px; margin-top: 1px; align-content: start; }
.btn { width: 34px; height: 10px; line-height: 8px; border: 1px solid #d3d9e2; text-align: center; color: #333; }
.btn.off { border-color: transparent; color: #9a9ea3; }
.btn.main { border-color: #8dbdf0; }
.dlg-foot { display: flex; justify-content: flex-end; gap: 2px; padding: 5px 4px 4px; }
```
